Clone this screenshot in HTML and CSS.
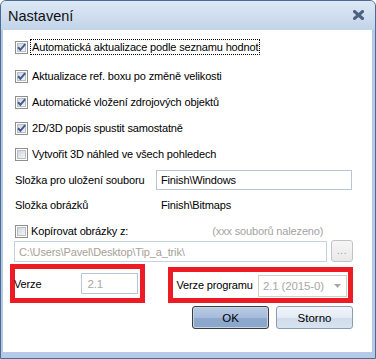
FILE: index.html
```html
<!DOCTYPE html>
<html lang="cs">
<head>
<meta charset="utf-8">
<title>Nastavení</title>
<link rel="stylesheet" href="styles.css">
</head>
<body>
<div class="window">
  <div class="titlebar">
    <span class="title">Nastavení</span>
    <svg class="close" width="11" height="10" viewBox="0 0 11 10"><path d="M1.5 1.5 L9.5 8.5 M9.5 1.5 L1.5 8.5" stroke="#4d6183" stroke-width="3" stroke-linecap="square"/></svg>
  </div>
  <div class="client">
    <div class="row r1">
      <span class="cb checked"><svg viewBox="0 0 13 13" width="13" height="13"><path d="M3 6.2 L5.4 8.8 L10.2 3.2" fill="none" stroke="#3f5d93" stroke-width="2"/></svg></span>
      <span class="lbl focus">Automatická aktualizace podle seznamu hodnot</span>
    </div>
    <div class="row r2">
      <span class="cb checked"><svg viewBox="0 0 13 13" width="13" height="13"><path d="M3 6.2 L5.4 8.8 L10.2 3.2" fill="none" stroke="#3f5d93" stroke-width="2"/></svg></span>
      <span class="lbl">Aktualizace ref. boxu po změně velikosti</span>
    </div>
    <div class="row r3">
      <span class="cb checked"><svg viewBox="0 0 13 13" width="13" height="13"><path d="M3 6.2 L5.4 8.8 L10.2 3.2" fill="none" stroke="#3f5d93" stroke-width="2"/></svg></span>
      <span class="lbl">Automatické vložení zdrojových objektů</span>
    </div>
    <div class="row r3">
      <span class="cb checked"><svg viewBox="0 0 13 13" width="13" height="13"><path d="M3 6.2 L5.4 8.8 L10.2 3.2" fill="none" stroke="#3f5d93" stroke-width="2"/></svg></span>
      <span class="lbl">2D/3D popis spustit samostatně</span>
    </div>
    <div class="row r3">
      <span class="cb"></span>
      <span class="lbl">Vytvořit 3D náhled ve všech pohledech</span>
    </div>
    <div class="row folder">
      <span class="flabel">Složka pro uložení souboru</span>
      <span class="input folder-input">Finish\Windows</span>
    </div>
    <div class="row pics">
      <span class="flabel">Složka obrázků</span>
      <span class="static">Finish\Bitmaps</span>
    </div>
    <div class="row copy">
      <span class="cb"></span>
      <span class="lbl">Kopírovat obrázky z:</span>
      <span class="found">(xxx souborů nalezeno)</span>
    </div>
    <div class="row path">
      <span class="input path-input">C:\Users\Pavel\Desktop\Tip_a_trik\</span>
      <span class="browse">...</span>
    </div>
    <div class="row versions">
      <div class="mark mark-left">
        <span class="vlabel">Verze</span>
        <span class="input ver-input">2.1</span>
      </div>
      <div class="mark mark-right">
        <span class="vlabel">Verze programu</span>
        <span class="combo"><span class="combo-text">2.1 (2015-0)</span><svg width="7" height="4" viewBox="0 0 7 4"><path d="M0 0 H7 L3.5 4 Z" fill="#a9a9a9"/></svg></span>
      </div>
    </div>
    <div class="row buttons">
      <span class="btn ok">OK</span>
      <span class="btn">Storno</span>
    </div>
  </div>
</div>
</body>
</html>
```
FILE: styles.css
```css
* { box-sizing: border-box; }
html, body { margin: 0; padding: 0; }
body {
  width: 376px;
  height: 359px;
  overflow: hidden;
  font-family: "Liberation Sans", Arial, sans-serif;
  font-size: 11px;
  font-weight: 400;
  letter-spacing: -0.15px;
  color: #000;
  background: #fff;
}
.window {
  width: 376px;
  height: 359px;
  display: flex;
  flex-direction: column;
  border: 1px solid #4d6a92;
  border-radius: 6px 6px 0 0;
  background: #b3cbe7;
}
.titlebar {
  height: 29px;
  display: flex;
  align-items: center;
  justify-content: space-between;
  padding: 0 11px 0 7px;
  border-radius: 5px 5px 0 0;
  background: linear-gradient(#dde8f5, #c2d4ea);
}
.title {
  font-size: 14.5px;
  letter-spacing: 0;
  color: #111;
  margin-top: 1px;
}
.close { margin-top: -1px; }
.client {
  flex: 1;
  margin: 0 3px 6px 2px;
  background: #fff;
  padding: 8px 19px 0 11px;
  display: flex;
  flex-direction: column;
}
.row {
  display: flex;
  align-items: center;
  height: 18px;
  flex-shrink: 0;
}
.r2 { margin-top: 11px; }
.r3 { margin-top: 8px; }
.cb {
  position: relative;
  width: 13px;
  height: 13px;
  margin-left: 1px;
  margin-right: 2px;
  border: 1px solid #8e8f8f;
  background: #fff;
  flex-shrink: 0;
}
.cb::before {
  content: "";
  position: absolute;
  left: 1px; top: 1px; right: 1px; bottom: 1px;
  border: 1px solid #b9bfc7;
  background: linear-gradient(135deg, #d2d7de, #f4f5f7);
}
.cb svg { position: absolute; left: -1px; top: -1px; }
.lbl {
  padding: 1px 1px;
  border: 1px solid transparent;
  white-space: nowrap;
}
.focus { border: 1px dotted #000; }
.folder { margin-top: 7px; height: 20px; }
.flabel { width: 142px; flex-shrink: 0; white-space: nowrap; padding-left: 1px; }
.input {
  display: flex;
  align-items: center;
  height: 100%;
  border: 1px solid #b7c7d9;
  padding: 0 4px;
  white-space: nowrap;
  background: #fff;
}
.folder-input { width: 196px; }
.pics { margin-top: 6px; }
.static { padding-left: 5px; }
.copy { margin-top: 8px; }
.copy .lbl { padding-left: 0; }
.found {
  margin-left: 82px;
  color: #a3a3a3;
  white-space: nowrap;
}
.path { height: 22px; }
.path-input {
  width: 313px;
  height: 21px;
  margin-top: 1px;
  color: #a5a199;
  border-color: #c6d3e0;
  margin-left: 0;
}
.browse {
  width: 22px;
  height: 22px;
  margin-left: 4px;
  border: 1px solid #c3c3c3;
  border-radius: 3px;
  background: linear-gradient(#f6f6f6, #e9e9e9);
  color: #9a9a9a;
  display: flex;
  justify-content: center;
  align-items: flex-end;
  padding-bottom: 5px;
  letter-spacing: 0.5px;
  font-size: 10px;
}
.versions {
  margin-top: 2px;
  height: 39px;
  align-items: flex-end;
  margin-left: -4px;
  gap: 23px;
}
.mark {
  display: flex;
  align-items: center;
  border: 5px solid #ed1c24;
}
.mark-left {
  width: 138px;
  height: 39px;
  padding: 0 2px 0 0;
  justify-content: space-between;
}
.mark-left .vlabel { margin-left: -1px; }
.mark-right {
  width: 188px;
  height: 36px;
  padding: 0 1px 0 3px;
  justify-content: space-between;
}
.ver-input {
  width: 57px;
  height: 21px;
  color: #a8a8a8;
  padding-left: 5px;
  font-size: 11.5px;
}
.combo {
  width: 89px;
  height: 22px;
  margin-top: 2px;
  border: 1px solid #d3cfc6;
  display: flex;
  align-items: center;
  justify-content: space-between;
  padding: 0 5px 0 4px;
  color: #a8a8a8;
  font-size: 11.5px;
  white-space: nowrap;
}
.buttons {
  margin-top: 3px;
  height: 23px;
  justify-content: flex-end;
  gap: 7px;
}
.btn {
  width: 77px;
  height: 23px;
  display: flex;
  align-items: center;
  justify-content: center;
  border: 1px solid #8a9bb4;
  border-radius: 3px;
  background: linear-gradient(#f2f6fb 0%, #e3ebf5 50%, #cfdcec 51%, #d8e3f0 100%);
  font-size: 11.5px;
  font-weight: 400;
  letter-spacing: 0;
  color: #000;
}
.ok {
  border-color: #3c3c3c;
  background: linear-gradient(#b9cbe3 0%, #a6bcdb 50%, #8ea9ce 51%, #8aa6cb 100%);
  box-shadow: inset 0 0 0 1px #c5d5ea;
}
```
